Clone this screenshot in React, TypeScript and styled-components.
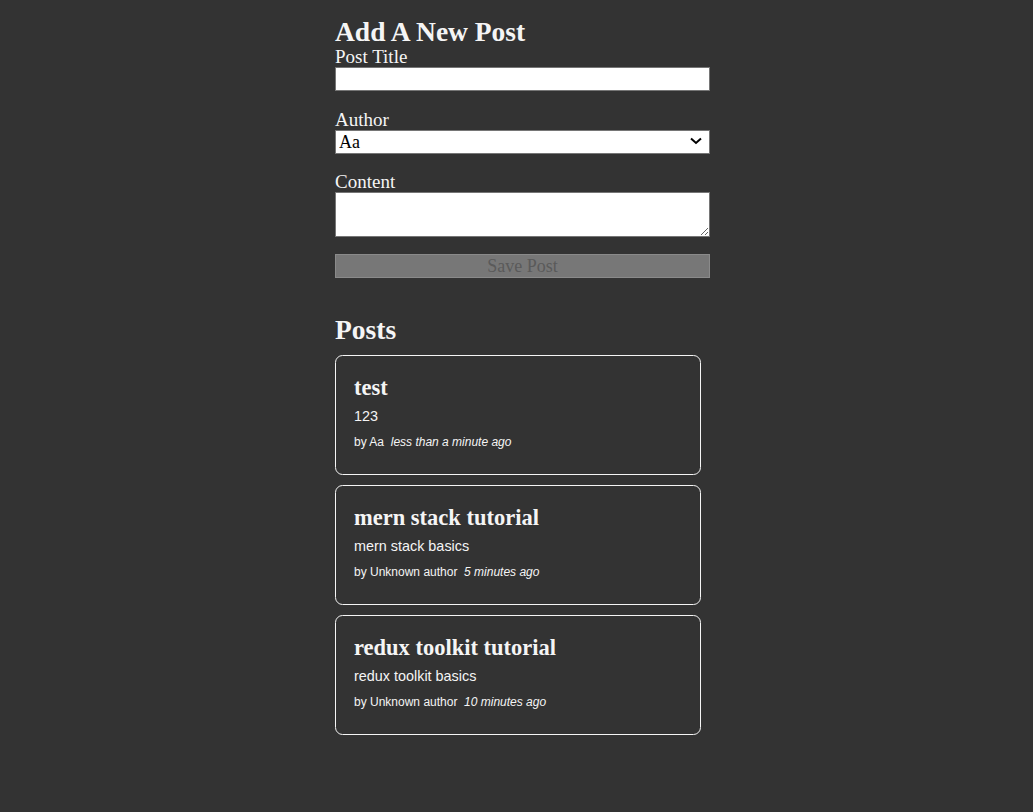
import styled, { createGlobalStyle } from "styled-components";

const GlobalStyle = createGlobalStyle`
    * {
        margin: 0;
        padding: 0;
        box-sizing: border-box;
    }
    body {
        min-height: 100vh;
        padding-left: 12px;
        background-color: #333;
        color: whitesmoke;
        font-family: "Liberation Serif", "Times New Roman", serif;
        font-size: 19px;
    }
`

const Main = styled.main`
    max-width: 375px;
    margin: 0 auto;
    padding-top: 16px;
`

const Section = styled.section<{ gap?: number }>`
    display: flex;
    flex-direction: column;
    margin-top: ${props => props.gap || 0}px;
`

const Heading = styled.h2`
    font-size: 27.5px;
    line-height: 31px;
    font-weight: bold;
`

const Form = styled.form`
    display: flex;
    flex-direction: column;
    margin-bottom: 24px;
`

const Label = styled.label`
    line-height: 20px;
`

const fieldStyles = `
    font: inherit;
    font-size: 18px;
    color: #000;
    background: #fff;
    border: 1px solid #767676;
    border-radius: 0;
    padding: 0 3px;
`

const Input = styled.input`
    ${fieldStyles}
    height: 24px;
    margin-bottom: 19px;
`

const SelectWrap = styled.div`
    position: relative;
    display: flex;
    flex-direction: column;
    margin-bottom: 18px;
`

const Select = styled.select`
    ${fieldStyles}
    appearance: none;
    height: 24px;
    padding: 0 3px;
    line-height: 22px;
`

const Chevron = styled.svg`
    position: absolute;
    right: 8px;
    top: 7px;
    pointer-events: none;
`

const TextArea = styled.textarea`
    ${fieldStyles}
    height: 45px;
    margin-bottom: 17px;
`

const SaveButton = styled.button`
    font: inherit;
    font-size: 18px;
    height: 24px;
    line-height: 22px;
    background: #777;
    color: #5a5a5a;
    border: 1px solid #8a8a8a;
    border-radius: 0;
`

const PostList = styled.div`
    display: flex;
    flex-direction: column;
    gap: 10px;
    margin-top: 10px;
`

const Article = styled.article`
    margin-right: 9px;
    height: 120px;
    border: 1px solid whitesmoke;
    border-radius: 7.5px;
    padding: 18px;
`

const PostTitle = styled.h3`
    font-size: 22.5px;
    line-height: 24px;
    padding-top: 2px;
    font-weight: bold;
`

const Excerpt = styled.p`
    font-family: "Liberation Sans", Arial, sans-serif;
    font-size: 14.4px;
    line-height: 1.4;
    margin: 6px 0 7px;
`

const Credit = styled(Excerpt)`
    font-size: 12px;
    margin: 8px 0 6px;
`

const posts = [
    { id: 1, title: "test", content: "123", author: "Aa", time: "less than a minute" },
    { id: 2, title: "mern stack tutorial", content: "mern stack basics", author: "Unknown author", time: "5 minutes" },
    { id: 3, title: "redux toolkit tutorial", content: "redux toolkit basics", author: "Unknown author", time: "10 minutes" },
]

const App = () => (
    <>
        <GlobalStyle />
        <Main>
            <Section>
                <Heading>Add A New Post</Heading>
                <Form onSubmit={e => e.preventDefault()}>
                    <Label htmlFor="postTitle">Post Title</Label>
                    <Input id="postTitle" type="text" />
                    <Label htmlFor="postAuthor">Author</Label>
                    <SelectWrap>
                        <Select id="postAuthor" defaultValue="1">
                            <option value="1">Aa</option>
                        </Select>
                        <Chevron width="12" height="8" viewBox="0 0 12 8">
                            <path d="M1 1.5 L6 6 L11 1.5" fill="none" stroke="#000" strokeWidth="2" />
                        </Chevron>
                    </SelectWrap>
                    <Label htmlFor="postContent">Content</Label>
                    <TextArea id="postContent" />
                    <SaveButton type="button" disabled>Save Post</SaveButton>
                </Form>
            </Section>
            <Section gap={12}>
                <Heading>Posts</Heading>
                <PostList>
                    {posts.map(post => (
                        <Article key={post.id}>
                            <PostTitle>{post.title}</PostTitle>
                            <Excerpt>{post.content}</Excerpt>
                            <Credit>
                                by {post.author}&nbsp; <i>{post.time} ago</i>
                            </Credit>
                        </Article>
                    ))}
                </PostList>
            </Section>
        </Main>
    </>
)

export default App
